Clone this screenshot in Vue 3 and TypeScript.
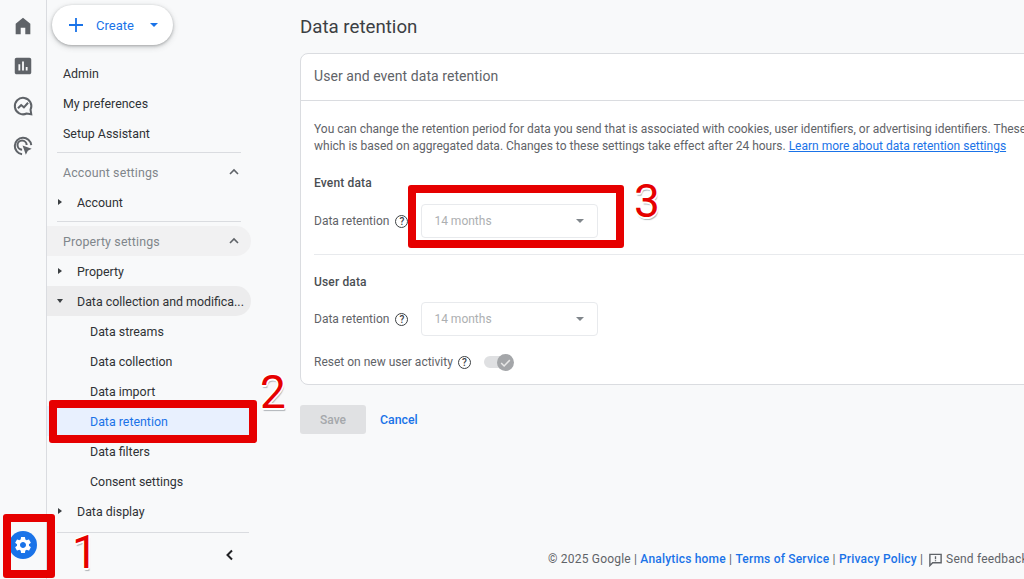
<script setup lang="ts">
interface NavRow { label: string; kind: 'plain' | 'branch' | 'open' | 'child' | 'active' }
const topLinks: string[] = ['Admin', 'My preferences', 'Setup Assistant']
const propertyRows: NavRow[] = [
  { label: 'Property', kind: 'branch' },
  { label: 'Data collection and modifica...', kind: 'open' },
  { label: 'Data streams', kind: 'child' },
  { label: 'Data collection', kind: 'child' },
  { label: 'Data import', kind: 'child' },
  { label: 'Data retention', kind: 'active' },
  { label: 'Data filters', kind: 'child' },
  { label: 'Consent settings', kind: 'child' },
  { label: 'Data display', kind: 'branch' },
]
</script>

<template>
  <div class="page">
    <nav class="rail">
      <svg class="rail-icon" viewBox="0 0 24 24"><path d="M4 21V9.5L12 3l8 6.5V21h-5.5v-7h-5v7z" fill="#5f6368" /></svg>
      <svg class="rail-icon" viewBox="0 0 24 24"><path d="M19 3H5c-1.1 0-2 .9-2 2v14c0 1.1.9 2 2 2h14c1.1 0 2-.9 2-2V5c0-1.1-.9-2-2-2zM9 17H7v-7h2v7zm4 0h-2V7h2v10zm4 0h-2v-4h2v4z" fill="#5f6368" /></svg>
      <svg class="rail-icon" viewBox="0 0 24 24" fill="none" stroke="#5f6368" stroke-width="2.2"><path d="M20.2 16A9 9 0 1 0 16 20.2L21 21z" /><path d="M6.5 14.5l3.5-3.5 3 2.5 4.5-5" /></svg>
      <svg class="rail-icon" viewBox="0 0 24 24" fill="none" stroke="#5f6368" stroke-width="2.2"><path d="M11 21a9 9 0 1 1 10-10" /><path d="M11 16a5 5 0 1 1 5-5" /><path d="M11.5 11.5l10 3.5-4.2 2.2-2.2 4.3z" fill="#5f6368" stroke="none" /></svg>
      <div class="rail-spacer"></div>
      <span class="gear">
        <svg viewBox="0 0 24 24" width="20" height="20"><path fill="#fff" d="M19.14 12.94c.04-.3.06-.61.06-.94 0-.32-.02-.64-.07-.94l2.03-1.58c.18-.14.23-.41.12-.61l-1.92-3.32c-.12-.22-.37-.29-.59-.22l-2.39.96c-.5-.38-1.03-.7-1.62-.94l-.36-2.54c-.04-.24-.24-.41-.48-.41h-3.84c-.24 0-.43.17-.47.41l-.36 2.54c-.59.24-1.13.57-1.62.94l-2.39-.96c-.22-.08-.47 0-.59.22L2.74 8.87c-.12.21-.08.47.12.61l2.03 1.58c-.05.3-.09.63-.09.94s.02.64.07.94l-2.03 1.58c-.18.14-.23.41-.12.61l1.92 3.32c.12.22.37.29.59.22l2.39-.96c.5.38 1.03.7 1.62.94l.36 2.54c.05.24.24.41.48.41h3.84c.24 0 .44-.17.47-.41l.36-2.54c.59-.24 1.13-.56 1.62-.94l2.39.96c.22.08.47 0 .59-.22l1.92-3.32c.12-.22.07-.47-.12-.61l-2.01-1.58zM12 15.6c-1.98 0-3.6-1.62-3.6-3.6s1.62-3.6 3.6-3.6 3.6 1.62 3.6 3.6-1.62 3.6-3.6 3.6z" /></svg>
      </span>
    </nav>

    <aside class="side">
      <div class="create">
        <svg viewBox="0 0 16 16" width="16" height="16"><path d="M8 1v14M1 8h14" stroke="#1a73e8" stroke-width="1.8" fill="none" /></svg>
        <span class="create-label">Create</span>
        <i class="caret blue"></i>
      </div>
      <div class="top-links">
        <div v-for="link in topLinks" :key="link" class="row plain">{{ link }}</div>
      </div>
      <hr class="rule" />
      <div class="row section">
        <span>Account settings</span>
        <svg class="chev" viewBox="0 0 12 12"><path d="M2 8l4-4 4 4" /></svg>
      </div>
      <div class="row branch"><i class="tri"></i>Account</div>
      <hr class="rule rule-b" />
      <div class="row section tinted">
        <span>Property settings</span>
        <svg class="chev" viewBox="0 0 12 12"><path d="M2 8l4-4 4 4" /></svg>
      </div>
      <div v-for="row in propertyRows" :key="row.label" class="row" :class="row.kind">
        <i v-if="row.kind === 'branch'" class="tri"></i>
        <i v-if="row.kind === 'open'" class="tri down"></i>
        {{ row.label }}
      </div>
      <hr class="rule rule-c" />
      <div class="collapse">
        <svg viewBox="0 0 12 12" width="12" height="12"><path d="M8 1.5L3.5 6 8 10.5" fill="none" stroke="#202124" stroke-width="2" /></svg>
      </div>
    </aside>

    <main class="main">
      <h1 class="title">Data retention</h1>
      <section class="card">
        <header class="card-head">User and event data retention</header>
        <div class="card-body">
          <p class="intro">
            You can change the retention period for data you send that is associated with cookies, user identifiers, or advertising identifiers. These<br />
            which is based on aggregated data. Changes to these settings take effect after 24 hours.
            <a class="link underline">Learn more about data retention settings</a>
          </p>
          <h2 class="group">Event data</h2>
          <div class="field">
            <span class="field-label">Data retention</span>
            <span class="help">?</span>
            <div class="select"><span>14 months</span><i class="caret grey"></i></div>
          </div>
          <hr class="card-rule" />
          <h2 class="group second">User data</h2>
          <div class="field">
            <span class="field-label">Data retention</span>
            <span class="help">?</span>
            <div class="select"><span>14 months</span><i class="caret grey"></i></div>
          </div>
          <div class="reset">
            <span class="field-label">Reset on new user activity</span>
            <span class="help">?</span>
            <span class="toggle">
              <span class="knob">
                <svg viewBox="0 0 12 12" width="13" height="13"><path d="M2 6.5l2.7 2.7L10 3.8" fill="none" stroke="#e8e8e8" stroke-width="1.4" /></svg>
              </span>
            </span>
          </div>
        </div>
      </section>
      <div class="actions">
        <span class="save">Save</span>
        <a class="link cancel">Cancel</a>
      </div>
      <footer class="foot">
        <span>© 2025 Google |&nbsp;</span><a class="link">Analytics home</a><span>&nbsp;|&nbsp;</span><a class="link">Terms of Service</a><span>&nbsp;|&nbsp;</span><a class="link">Privacy Policy</a><span>&nbsp;|</span>
        <svg class="fb" viewBox="0 0 16 16" width="15" height="15"><path d="M2 2.5h12v9H5l-3 3z" fill="none" stroke="#5f6368" stroke-width="1.5" /><path d="M8 4.5v3.2M8 8.7v1.2" stroke="#5f6368" stroke-width="1.4" /></svg>
        <span class="fb-text">Send feedback</span>
      </footer>
    </main>

    <div class="mark mark-1"></div>
    <div class="mark mark-2"></div>
    <div class="mark mark-3"></div>
    <span class="num num-1">1</span>
    <span class="num num-2">2</span>
    <span class="num num-3">3</span>
  </div>
</template>

<style>
html, body { margin: 0; overflow: hidden; background: #f8f9fa; }
</style>

<style scoped>
.page {
  position: relative;
  display: flex;
  width: 1024px;
  height: 579px;
  overflow: hidden;
  background: #f8f9fa;
  color: #3c4043;
  font-family: Roboto, "Liberation Sans", sans-serif;
  font-size: 13px;
}
.rail {
  flex: 0 0 46px;
  display: flex;
  flex-direction: column;
  align-items: center;
  box-sizing: content-box;
  border-right: 1px solid #dadce0;
  padding-top: 15px;
  gap: 18px;
}
.rail-icon { width: 22px; height: 22px; flex: none; }
.rail-spacer { flex: 1; }
.gear {
  width: 28px;
  height: 28px;
  border-radius: 50%;
  background: #1a73e8;
  display: flex;
  align-items: center;
  justify-content: center;
  margin-bottom: 20px;
  margin-top: -18px;
}
.side {
  flex: 0 0 204px;
  min-width: 0;
  display: flex;
  flex-direction: column;
}
.create {
  margin: 5px 0 0 5px;
  width: 121px;
  height: 40px;
  box-sizing: border-box;
  padding-left: 16px;
  border-radius: 20px;
  background: #fff;
  box-shadow: 0 1px 3px rgba(60,64,67,.35), 0 2px 6px rgba(60,64,67,.2);
  display: flex;
  align-items: center;
  color: #1a73e8;
}
.create-label { margin-left: 12px; }
.caret {
  width: 0;
  height: 0;
  border-left: 4px solid transparent;
  border-right: 4px solid transparent;
  border-top: 4px solid #1a73e8;
}
.caret.blue { margin-left: 16px; }
.caret.grey { border-top-color: #80868b; margin-left: auto; margin-right: 1px; }
.top-links { margin-top: 13px; }
.row {
  height: 30px;
  box-sizing: border-box;
  display: flex;
  align-items: center;
  white-space: nowrap;
  font-size: 12.4px;
  font-weight: 400;
  color: #2f3235;
  border-radius: 0 15px 15px 0;
}
.plain { padding-left: 16px; }
.branch, .open { padding-left: 10px; position: relative; }
.open { background: #ececed; }
.child, .active { padding-left: 43px; }
.active { background: #e8f0fe; color: #1a73e8; border-radius: 0; }
.section {
  padding: 0 11px 0 16px;
  justify-content: space-between;
  color: #80868b;
  letter-spacing: .15px;
}
.tinted { background: #f1f1f2; }
.chev { width: 12px; height: 12px; fill: none; stroke: #5f6368; stroke-width: 1.6; }
.tri {
  width: 0;
  height: 0;
  border-top: 3.5px solid transparent;
  border-bottom: 3.5px solid transparent;
  border-left: 4px solid #3c4043;
  margin-left: 1px;
  margin-right: 15px;
}
.tri.down {
  border-left: 3.5px solid transparent;
  border-right: 3.5px solid transparent;
  border-top: 4px solid #3c4043;
  border-bottom: 0;
  margin-left: 0;
  margin-right: 14px;
}
.rule { width: 184px; margin: 4px 0 4px 10px; border: 0; border-top: 1px solid #dadce0; }
.rule-c { width: 192px; margin-top: 6px; margin-bottom: 0; }
.collapse {
  flex: 1;
  display: flex;
  align-items: center;
  justify-content: flex-end;
  padding-right: 15px;
  padding-bottom: 3px;
}
.main {
  flex: 1;
  min-width: 0;
  padding-left: 49px;
  display: flex;
  flex-direction: column;
}
.title {
  margin: 0;
  height: 53px;
  line-height: 54px;
  font-size: 18.7px;
  font-weight: 400;
  color: #3c4043;
}
.card {
  width: 820px;
  height: 332px;
  flex: none;
  box-sizing: border-box;
  background: #fff;
  border: 1px solid #dadce0;
  border-radius: 8px;
}
.card-head {
  height: 46px;
  line-height: 45px;
  padding-left: 13px;
  border-bottom: 1px solid #dadce0;
  font-size: 14px;
  letter-spacing: .06px;
  color: #5f6368;
}
.card-body { padding: 20px 13px 0; }
.intro {
  margin: 0;
  white-space: nowrap;
  font-size: 12px;
  line-height: 17px;
  color: #5f6368;
}
.link { color: #1a73e8; }
.underline { text-decoration: underline; }
.group { margin: 20px 0 0; font-size: 12px; line-height: 16px; font-weight: 500; color: #4a4e52; letter-spacing: .15px; }
.group.second { margin-top: 19px; }
.field { display: flex; align-items: center; margin-top: 13px; height: 34px; }
.field-label { font-size: 12px; color: #5f6368; }
.help {
  width: 11px;
  height: 11px;
  margin-left: 6px;
  border: 1.2px solid #3c4043;
  border-radius: 50%;
  font-size: 10px;
  line-height: 11px;
  text-align: center;
  color: #3c4043;
  font-weight: 500;
}
.select {
  margin-left: 13px;
  width: 177px;
  height: 34px;
  box-sizing: border-box;
  border: 1px solid #e8eaed;
  border-radius: 4px;
  padding: 0 12px;
  display: flex;
  align-items: center;
  font-size: 12px;
  color: #adafb1;
}
.card-rule { width: 760px; margin: 16px 0 0; border: 0; border-top: 1px solid #e8eaed; }
.group.second + .field { margin-top: 12px; }
.reset { display: flex; align-items: center; margin-top: 9px; height: 34px; }
.reset .help { margin-left: 5px; }
.toggle {
  position: relative;
  margin-left: 13px;
  width: 28px;
  height: 12px;
  background: #dfe0e2;
  border-radius: 6px;
}
.knob {
  position: absolute;
  right: -2px;
  top: -2.5px;
  width: 17px;
  height: 17px;
  border-radius: 50%;
  background: #a4a6a9;
  display: flex;
  align-items: center;
  justify-content: center;
}
.actions { display: flex; align-items: center; margin-top: 20px; }
.save {
  width: 66px;
  height: 29px;
  background: #e0e1e3;
  border-radius: 3px;
  line-height: 30px;
  text-align: center;
  font-size: 12px;
  font-weight: 500;
  color: #a5a8ab;
}
.cancel { margin-left: 14px; font-size: 12.3px; font-weight: 500; }
.foot {
  margin-top: auto;
  margin-left: 248px;
  height: 40px;
  display: flex;
  align-items: center;
  white-space: nowrap;
  font-size: 12px;
  letter-spacing: .2px;
  color: #5f6368;
}
.foot .link { font-weight: 500; }
.fb { margin-left: 5px; flex: none; }
.fb-text { margin-left: 3px; }
.mark {
  position: absolute;
  box-sizing: border-box;
  border: 8px solid #e60000;
  border-radius: 3px;
}
.mark-1 { left: 3px; top: 514px; width: 52px; height: 64px; }
.mark-2 { left: 49px; top: 400px; width: 208px; height: 43px; }
.mark-3 { left: 408px; top: 185px; width: 216px; height: 63px; }
.num {
  position: absolute;
  font-family: Roboto, sans-serif;
  font-weight: 400;
  font-size: 46px;
  line-height: 46px;
  color: #e60000;
  text-shadow: 1.5px 0 0 #fff, -1.5px 0 0 #fff, 0 -1.5px 0 #fff, 0 1.5px 0 #fff, 1px 1px 0 #fff, -1px 1px 0 #fff, 1px -1px 0 #fff, -1px -1px 0 #fff, 1px 2.5px 1px #b0b4b8;
}
.num-1 { left: 72px; top: 529px; }
.num-2 { left: 260px; top: 369px; }
.num-3 { left: 634px; top: 178px; }
</style>
